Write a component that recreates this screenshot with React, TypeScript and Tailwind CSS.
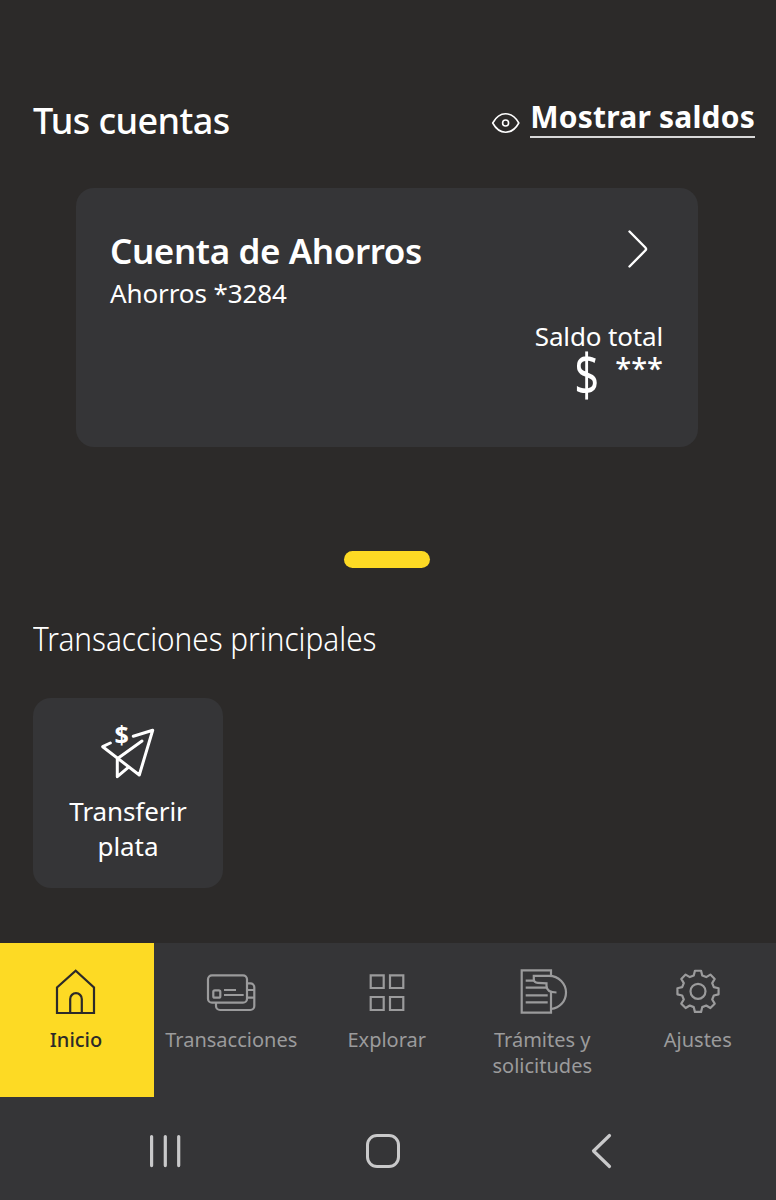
import type { ReactNode } from "react";

const GEAR_POINTS = Array.from({ length: 8 })
	.flatMap((_, i) =>
		[
			[-15, 16.4],
			[-8.5, 20.8],
			[8.5, 20.8],
			[15, 16.4],
		].map(([offset, r]) => {
			const a = ((i * 45 + offset - 90) * Math.PI) / 180;
			return `${(28 + r * Math.cos(a)).toFixed(2)},${(23.3 + r * Math.sin(a)).toFixed(2)}`;
		}),
	)
	.join(" ");

function NavIcon({ children }: { children: ReactNode }) {
	return (
		<svg width="56" height="48" viewBox="0 0 56 48" fill="none" stroke="currentColor" strokeWidth="2.2" className="shrink-0" aria-hidden>
			{children}
		</svg>
	);
}

const navItems = [
	{
		label: "Transacciones",
		icon: (
			<NavIcon>
				<rect x="4" y="7.3" width="39" height="27.4" rx="4" />
				<rect x="9.3" y="22.3" width="7" height="7.4" rx="1.5" />
				<path d="M20 22h12M20 27h19.7" />
				<path d="M43 15.3h3.3a4 4 0 0 1 4 4V38a4 4 0 0 1-4 4H16a4 4 0 0 1-4-4v-3M43 22h7M43 29.7h7" />
			</NavIcon>
		),
	},
	{
		label: "Explorar",
		icon: (
			<NavIcon>
				<path d="M11.7 7.3h13V20h-13zM31 7.3h13.3V20H31zM11.7 29h13v13h-13zM31 29h13.3v13H31z" />
			</NavIcon>
		),
	},
	{
		label: "Trámites y solicitudes",
		icon: (
			<NavIcon>
				<path d="M36 7.5V2.3H6.7v42.4H36V23.5" />
				<path d="M10.7 12.7H20M10.7 19.7h22M10.7 27.3h22M10.7 34.3h22" />
				<path d="M36 41c9-1 15-8 15-16.5S44 7.8 34 7.8H18.8V11q0 3.700 4 3.900l8.700.4v3c0 3.500 3 6 10 6.200" />
			</NavIcon>
		),
	},
	{
		label: "Ajustes",
		icon: (
			<NavIcon>
				<polygon points={GEAR_POINTS} strokeLinejoin="round" />
				<circle cx="28" cy="23.3" r="7.5" />
			</NavIcon>
		),
	},
];

export default function App() {
	return (
		<div className="flex h-[1200px] w-[776px] flex-col overflow-hidden bg-[#2c2a29] font-['Noto_Sans','Open_Sans',sans-serif] text-white">
			<header className="flex h-[188px] shrink-0 justify-between pr-[21px] pl-[33px]">
				<h1 className="pt-[97px] text-[36px] leading-[48px] font-medium tracking-[-0.6px]">Tus cuentas</h1>
				<div className="flex items-start gap-[9px]">
					<svg width="30" height="22" viewBox="0 0 30 22" fill="none" stroke="currentColor" strokeWidth="1.6" className="mt-[112px]" aria-hidden>
						<path d="M1.7 11C5 5 9.5 1.8 14.6 1.8S24.5 5 27.8 11C24.5 17 20 20.2 14.6 20.2S5 17 1.7 11z" strokeLinejoin="round" />
						<circle cx="14.6" cy="11" r="3" />
					</svg>
					<a href="#" className="mt-[98px] h-[40px] border-b-2 border-[#d8d8d8] text-[30px] leading-[38px] font-bold tracking-[0.2px] whitespace-nowrap">
						Mostrar saldos
					</a>
				</div>
			</header>

			<section className="mr-[78px] ml-[76px] flex h-[259px] shrink-0 flex-col rounded-[18px] bg-[#353537] pr-[35px] pl-[34px]">
				<div className="flex h-[124px] justify-between pt-[39px]">
					<div>
						<h2 className="text-[35px] leading-[48px] font-semibold tracking-[-0.4px]">Cuenta de Ahorros</h2>
						<p className="text-[26px] leading-[36px] tracking-[-0.1px]">Ahorros *3284</p>
					</div>
					<svg width="24" height="44" viewBox="0 0 24 44" fill="none" stroke="currentColor" strokeWidth="2.4" strokeLinecap="round" className="mr-[13px]" aria-hidden>
						<path d="M3.5 4.5 19.3 20.5Q20.8 22 19.3 23.5L3.5 39.5" strokeLinejoin="round" />
					</svg>
				</div>
				<div className="flex flex-col items-end pt-[6px]">
					<p className="text-[26px] leading-[36px] tracking-[-0.15px]">Saldo total</p>
					<p className="flex h-[60px] items-start gap-[16px]">
						<span className="inline-block origin-right scale-x-75 text-[58px] leading-[39px] font-normal">$</span>
						<span className="text-[29px] leading-[28px] font-medium">***</span>
					</p>
				</div>
			</section>

			<div className="mt-[104px] ml-[344px] h-[17px] w-[86px] shrink-0 rounded-full bg-[#fdda24]" />

			<section className="mt-[48px] flex-1 pl-[33px]">
				<h2 className="origin-left scale-x-90 text-[33px] leading-[46px] font-light">Transacciones principales</h2>
				<button type="button" className="mt-[36px] flex h-[190px] w-[190px] flex-col items-center rounded-[18px] bg-[#353537] pt-[14px]">
					<svg width="56" height="68" viewBox="0 -8 56 68" fill="none" stroke="currentColor" strokeWidth="3" strokeLinecap="round" strokeLinejoin="round" aria-hidden>
						<path d="M33.3 16.3 52.7 10.3 39.3 55 2.7 26.7 10.3 23" />
						<path d="M42 21 17.3 38.7V56.7L28.3 47.3" />
						<text x="21.7" y="23.8" textAnchor="middle" fontSize="25" fontWeight="700" fill="currentColor" stroke="none">
							$
						</text>
					</svg>
					<span className="mt-[14px] w-[130px] text-[26px] leading-[35px] tracking-[-0.1px]">Transferir plata</span>
				</button>
			</section>

			<nav className="flex h-[154px] shrink-0 bg-[#353537] text-[20px] leading-[26px] text-[#9b9b9c]">
				<a href="#" className="flex w-[154px] flex-col items-center bg-[#fdda24] pt-[25px] pr-[2px] font-medium text-[#2c2a29]">
					<NavIcon>
						<path d="M9 45V19.5L27.7 2.7 46 19.5V45z" />
						<path d="M22.2 45V31a5.8 5.8 0 0 1 11.6 0V45" />
					</NavIcon>
					<span className="mt-[11px]">Inicio</span>
				</a>
				{navItems.map((item) => (
					<a key={item.label} href="#" className="flex flex-1 flex-col items-center pt-[25px] text-center">
						{item.icon}
						<span className="mt-[11px] mr-px max-w-[140px]">{item.label}</span>
					</a>
				))}
			</nav>

			<footer className="flex h-[103px] shrink-0 items-center bg-[#353537] pl-[148px] text-[#c9c9ca]">
				<svg width="36" height="36" viewBox="0 0 36 36" stroke="currentColor" strokeWidth="3.2" strokeLinecap="round" className="mt-[5px]" aria-hidden>
					<path d="M3.6 3.6v29M17.3 3.6v29M30.7 3.6v29" />
				</svg>
				<div className="mt-[5px] ml-[182px] h-[34px] w-[34px] rounded-[11px] border-3 border-current" />
				<svg width="24" height="38" viewBox="0 0 24 38" fill="none" stroke="currentColor" strokeWidth="3.2" strokeLinecap="round" strokeLinejoin="round" className="mt-[5px] ml-[189px]" aria-hidden>
					<path d="M20.5 3.5 4.5 19 20.5 34.5" />
				</svg>
			</footer>
		</div>
	);
}
